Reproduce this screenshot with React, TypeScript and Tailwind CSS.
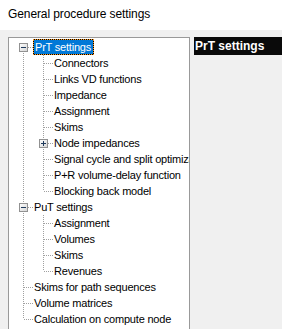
import React from "react"

type Node = {
  label: string
  children?: Node[]
  collapsed?: boolean
  selected?: boolean
}

const tree: Node[] = [
  {
    label: "PrT settings",
    selected: true,
    children: [
      { label: "Connectors" },
      { label: "Links VD functions" },
      { label: "Impedance" },
      { label: "Assignment" },
      { label: "Skims" },
      { label: "Node impedances", collapsed: true, children: [{ label: "x" }] },
      { label: "Signal cycle and split optimization" },
      { label: "P+R volume-delay function" },
      { label: "Blocking back model" },
    ],
  },
  {
    label: "PuT settings",
    children: [
      { label: "Assignment" },
      { label: "Volumes" },
      { label: "Skims" },
      { label: "Revenues" },
    ],
  },
  { label: "Skims for path sequences" },
  { label: "Volume matrices" },
  { label: "Calculation on compute node" },
]

type Row = {
  node: Node
  guides: boolean[]
  first: boolean
  last: boolean
}

function flatten(nodes: Node[], guides: boolean[], rows: Row[], root: boolean) {
  nodes.forEach((node, i) => {
    const last = i === nodes.length - 1
    rows.push({ node, guides, first: root && i === 0, last })
    if (node.children && !node.collapsed) {
      flatten(node.children, [...guides, !last], rows, false)
    }
  })
  return rows
}

const dot = "#a0a0a0"

function Guide({ on }: { on: boolean }) {
  return (
    <svg width="20" height="16" className="shrink-0 block">
      {on && (
        <line x1="10.5" y1="0" x2="10.5" y2="16" stroke={dot} strokeDasharray="1 1" />
      )}
    </svg>
  )
}

function Connector({ row }: { row: Row }) {
  const { node, first, last } = row
  const hasKids = !!node.children
  return (
    <svg width="20" height="16" className="shrink-0 block">
      <defs>
        <linearGradient id="exp" x1="0" y1="0" x2="1" y2="1">
          <stop offset="0" stopColor="#ffffff" />
          <stop offset="1" stopColor="#d4d4d4" />
        </linearGradient>
      </defs>
      {!first && (
        <line x1="10.5" y1="0" x2="10.5" y2="8" stroke={dot} strokeDasharray="1 1" />
      )}
      {!last && (
        <line x1="10.5" y1="8" x2="10.5" y2="16" stroke={dot} strokeDasharray="1 1" />
      )}
      <line x1="11" y1="8.5" x2="20" y2="8.5" stroke={dot} strokeDasharray="1 1" />
      {hasKids && (
        <g>
          <rect x="6.5" y="4.5" width="8" height="8" fill="url(#exp)" stroke="#919191" />
          <line x1="8" y1="8.5" x2="13" y2="8.5" stroke="#1e395b" />
          {node.collapsed && (
            <line x1="10.5" y1="6" x2="10.5" y2="11" stroke="#1e395b" />
          )}
        </g>
      )}
    </svg>
  )
}

function TreeRow({ row }: { row: Row }) {
  return (
    <div className="flex h-4 items-center whitespace-nowrap">
      {row.guides.map((g, i) => (
        <Guide key={i} on={g} />
      ))}
      <Connector row={row} />
      {row.node.selected ? (
        <span className="h-4 border border-dotted border-[#ff9a1f] bg-black">
          <span className="block h-[14px] bg-[#0078d7] pl-[1px] pr-[2px] leading-[14px] text-white">
            {row.node.label}
          </span>
        </span>
      ) : (
        <span className="px-[1px] leading-4 text-black">{row.node.label}</span>
      )}
    </div>
  )
}

export default function App() {
  const rows = flatten(tree, [], [], true)

  return (
    <div
      className="h-[329px] w-[282px] overflow-hidden bg-[#f0f0f0]"
      style={{ fontFamily: '"Liberation Sans", Arial, sans-serif' }}
    >
      <div className="flex h-[30px] items-center bg-white pl-2 pb-[2px] text-[12px] tracking-[-0.1px] text-black">
        General procedure settings
      </div>
      <div className="flex pl-2 pt-[7px]">
        <div className="h-[300px] w-[182px] shrink-0 overflow-hidden border border-[#999] bg-white pl-1 pt-[1px] text-[11px] tracking-[-0.2px]">
          {rows.map((row, i) => (
            <TreeRow key={i} row={row} />
          ))}
        </div>
        <div className="ml-1 flex-1">
          <div className="flex h-[18px] items-center bg-[#0a0a0a] pl-[1px] text-[12px] font-bold text-white">
            PrT settings
          </div>
        </div>
      </div>
    </div>
  )
}
